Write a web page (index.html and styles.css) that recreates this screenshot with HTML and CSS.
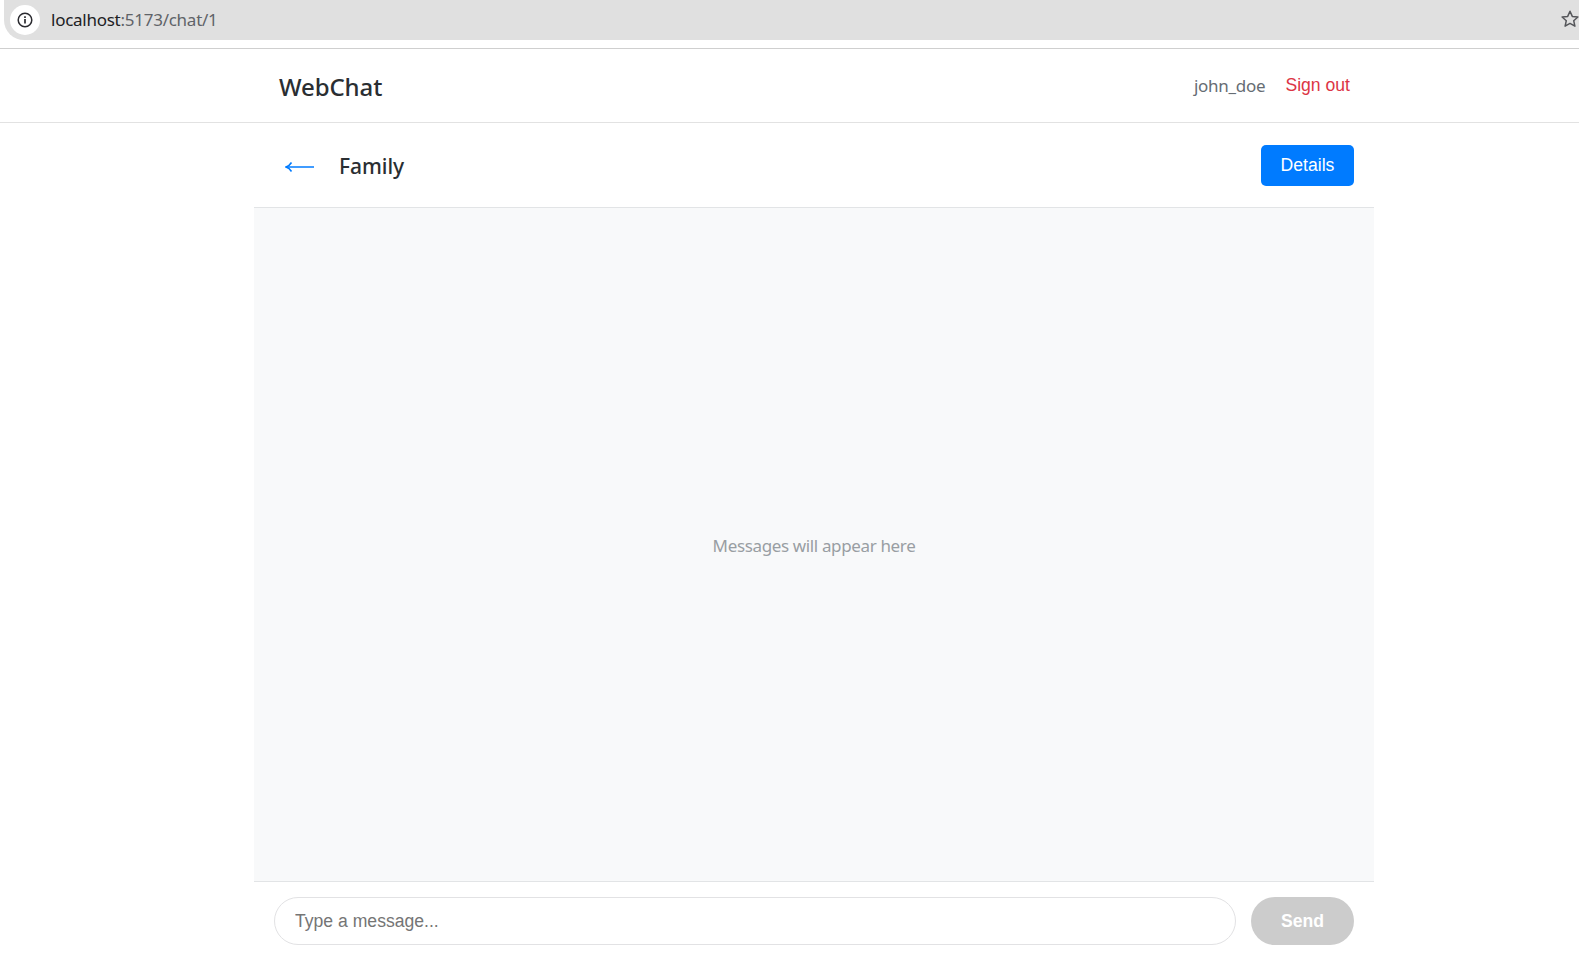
FILE: index.html
```html
<!DOCTYPE html>
<html lang="en">
<head>
  <meta charset="UTF-8">
  <title>WebChat</title>
  <link rel="stylesheet" href="styles.css">
</head>
<body>
  <div class="browser-bar">
    <div class="url-pill">
      <span class="info-badge">
        <svg width="16" height="16" viewBox="0 0 16 16" fill="none" stroke="#2b2b30" stroke-width="1.5">
          <circle cx="8" cy="8" r="6.8"/>
          <path d="M8 7v4.6" stroke-width="1.7"/>
          <path d="M8 4.2v1.7" stroke-width="1.7"/>
        </svg>
      </span>
      <span class="url"><span class="url-host">localhost</span>:5173/chat/1</span>
      <svg class="star" width="20" height="20" viewBox="0 0 20 20" fill="none" stroke="#55565a" stroke-width="1.5" stroke-linejoin="round">
        <path d="M10 2.2l2.3 5.2 5.6.6-4.2 3.7 1.2 5.5L10 14.4l-4.9 2.8 1.2-5.5L2.1 8l5.6-.6z"/>
      </svg>
    </div>
  </div>

  <header class="topbar">
    <div class="topbar-inner">
      <div class="brand">WebChat</div>
      <div class="user-box">
        <span class="username">john_doe</span>
        <a class="signout">Sign out</a>
      </div>
    </div>
  </header>

  <main class="chat">
    <div class="chat-head">
      <div class="chat-title">
        <span class="back">
          <svg width="30" height="14" viewBox="0 0 30 14" fill="none" stroke="#007bff" stroke-width="1.5">
            <path d="M1 7h28"/>
            <path d="M6.5 2.5Q4.5 5.8 1 7q3.500 1.200 5.500 4.500"/>
          </svg>
        </span>
        <h2>Family</h2>
      </div>
      <button class="details-btn">Details</button>
    </div>
    <div class="messages">
      <p>Messages will appear here</p>
    </div>
    <div class="composer">
      <input type="text" class="msg-input" placeholder="Type a message...">
      <button class="send-btn">Send</button>
    </div>
  </main>
</body>
</html>
```

FILE: styles.css
```css
html, body {
  margin: 0;
  padding: 0;
  height: 958px;
  overflow: hidden;
  background-color: #ffffff;
}
body {
  font-family: 'Liberation Sans', Arial, sans-serif;
}
.browser-bar {
  height: 48px;
  box-sizing: border-box;
}
.url-pill {
  height: 40px;
  margin-left: 4px;
  padding-left: 6px;
  background-color: #e0e0e0;
  border-bottom-left-radius: 20px;
  display: flex;
  align-items: center;
  position: relative;
}
.info-badge {
  width: 30px;
  height: 30px;
  border-radius: 50%;
  background-color: #ffffff;
  display: flex;
  align-items: center;
  justify-content: center;
}
.url {
  margin-left: 11px;
  margin-top: -2px;
  font-family: 'Noto Sans', sans-serif;
  font-size: 17px;
  letter-spacing: -0.26px;
  color: #5f6368;
}
.url-host {
  color: #202124;
}
.star {
  position: absolute;
  right: -1px;
  top: 9px;
}
.topbar {
  border-top: 1px solid #cfcfcf;
  border-bottom: 1px solid #e2e2e2;
  height: 73px;
}
.topbar-inner {
  width: 1120px;
  margin-left: 254px;
  box-sizing: border-box;
  padding: 1px 24px 0 25px;
  height: 100%;
  display: flex;
  align-items: center;
  justify-content: space-between;
}
.brand {
  font-family: 'Noto Sans', sans-serif;
  font-size: 24px;
  font-weight: 500;
  letter-spacing: -0.1px;
  color: #2a2e32;
}
.user-box {
  display: flex;
  align-items: center;
  gap: 20px;
}
.username {
  font-family: 'Noto Sans', sans-serif;
  font-size: 17px;
  letter-spacing: -0.25px;
  color: #666c73;
  margin-top: -1px;
}
.signout {
  font-size: 17.6px;
  color: #dc3545;
  margin-top: -1px;
}
.chat {
  width: 1120px;
  margin-left: 254px;
  height: 835px;
  display: flex;
  flex-direction: column;
}
.chat-head {
  height: 85px;
  flex-shrink: 0;
  box-sizing: border-box;
  border-bottom: 1px solid #e2e4e6;
  padding: 1px 20px 0 31px;
  display: flex;
  align-items: center;
  justify-content: space-between;
}
.chat-title {
  display: flex;
  align-items: center;
  gap: 24px;
}
.back {
  display: flex;
  margin-top: 2px;
}
.chat-title h2 {
  margin: 0;
  font-family: 'Noto Sans', sans-serif;
  font-size: 21px;
  font-weight: 500;
  letter-spacing: -0.05px;
  color: #2a2e32;
}
.details-btn {
  width: 93px;
  height: 41px;
  border: none;
  border-radius: 5px;
  background-color: #007bff;
  color: white;
  font-family: 'Liberation Sans', Arial, sans-serif;
  font-size: 17.6px;
}
.messages {
  flex: 1;
  background-color: #f8f9fa;
  display: flex;
  align-items: center;
  justify-content: center;
}
.messages p {
  margin: 2px 0 0;
  font-family: 'Noto Sans', sans-serif;
  font-size: 17px;
  letter-spacing: -0.36px;
  color: #999ea3;
}
.composer {
  flex-shrink: 0;
  height: 77px;
  box-sizing: border-box;
  border-top: 1px solid #e2e4e6;
  padding: 15px 20px 14px;
  display: flex;
  gap: 15px;
}
.msg-input {
  flex: 1;
  box-sizing: border-box;
  height: 48px;
  border: 1px solid #e2e2e4;
  border-radius: 24px;
  padding: 0 20px;
  font-family: 'Liberation Sans', Arial, sans-serif;
  font-size: 17.6px;
  outline: none;
}
.msg-input::placeholder {
  color: #757575;
  opacity: 1;
}
.send-btn {
  width: 103px;
  height: 48px;
  border: none;
  border-radius: 24px;
  background-color: #cccccc;
  color: white;
  font-family: 'Liberation Sans', Arial, sans-serif;
  font-size: 17.6px;
  font-weight: bold;
}
```
